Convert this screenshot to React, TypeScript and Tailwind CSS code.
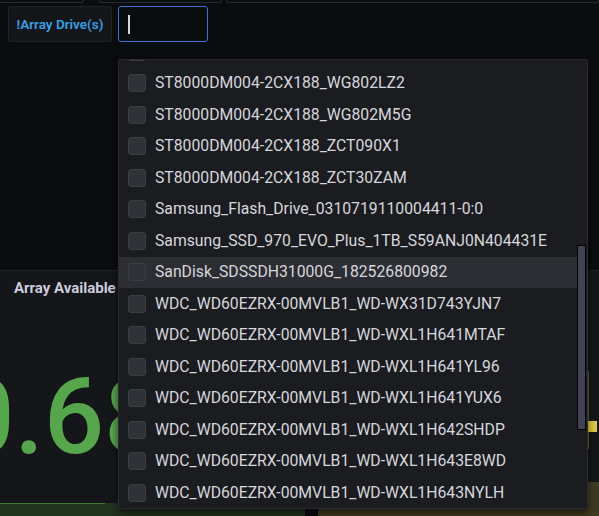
import React from 'react';

const drives: string[] = [
  'ST8000DM004-2CX188_WG802KZ1',
  'ST8000DM004-2CX188_WG802LZ2',
  'ST8000DM004-2CX188_WG802M5G',
  'ST8000DM004-2CX188_ZCT090X1',
  'ST8000DM004-2CX188_ZCT30ZAM',
  'Samsung_Flash_Drive_0310719110004411-0:0',
  'Samsung_SSD_970_EVO_Plus_1TB_S59ANJ0N404431E',
  'SanDisk_SDSSDH31000G_182526800982',
  'WDC_WD60EZRX-00MVLB1_WD-WX31D743YJN7',
  'WDC_WD60EZRX-00MVLB1_WD-WXL1H641MTAF',
  'WDC_WD60EZRX-00MVLB1_WD-WXL1H641YL96',
  'WDC_WD60EZRX-00MVLB1_WD-WXL1H641YUX6',
  'WDC_WD60EZRX-00MVLB1_WD-WXL1H642SHDP',
  'WDC_WD60EZRX-00MVLB1_WD-WXL1H643E8WD',
  'WDC_WD60EZRX-00MVLB1_WD-WXL1H643NYLH',
];

const DriveRow: React.FC<{ label: string; active?: boolean }> = ({ label, active }) => (
  <div
    className={`flex h-[31.5px] shrink-0 items-center pl-[9px] ${active ? 'bg-[#2d2e33]' : ''}`}
  >
    <span className="h-[18px] w-[18px] shrink-0 rounded-[3px] border border-[#3d3e43] bg-[#313237]" />
    <span className="ml-[9px] whitespace-nowrap text-[15.75px] text-[#d6d7dd]">{label}</span>
  </div>
);

export default function App() {
  return (
    <div className="relative h-[516px] w-[599px] overflow-hidden bg-[#0b0c0e] font-['Roboto',sans-serif]">
      {/* bottoms of the row above */}
      <div className="flex h-[3px] gap-[24px]">
        <div className="ml-[-4px] w-[88px] rounded-b-[3px] border-x border-b border-[#2a2b30]" />
        <div className="-ml-[9px] w-[123px] rounded-b-[3px] border-x border-b border-[#2a2b30]" />
        <div className="-ml-[20px] flex-1 rounded-b-[3px] border-x border-b border-[#2a2b30]" />
      </div>

      {/* variable bar */}
      <div className="flex gap-[6px] px-[8px] pt-[3px]">
        <div className="flex h-[36px] w-[104px] items-center justify-center rounded-[3px] border border-[#202226] bg-[#141619] text-[13.5px] font-semibold text-[#33a2e5]">
          !Array Drive(s)
        </div>
        <div className="flex h-[36px] w-[90px] items-center rounded-[3px] border border-[#3d71d9] bg-[#0b0c0e] pl-[9px]">
          <span className="h-[19px] w-[2px] bg-[#d8d9dd]" />
        </div>
      </div>

      {/* panels behind the dropdown */}
      <div className="mt-[228px] flex h-[246px] gap-[13px]">
        <div className="relative flex w-[305px] flex-col overflow-hidden border-t border-[#202226] bg-[#141619]">
          <div className="pl-[14px] pt-[6px] text-[15px] font-bold text-[#ccccdc]">Array Available</div>
          <div className="ml-[-106px] mt-[64px] text-[106px] font-medium leading-none text-[#56a64b]">30.68%</div>
          <div className="absolute bottom-0 left-0 right-0 h-[13px] bg-[#22341f]">
            <div className="h-[1px] w-[105px] bg-[#3f7a35]" />
          </div>
        </div>
        <div className="relative flex-1 overflow-hidden border-t border-[#202226] bg-[#141619]">
          <div className="absolute left-[270px] top-[100px] h-[78px] w-[1px] bg-[#6b6228]" />
          <div className="absolute left-[270px] top-[150px] h-[11px] w-[9px] bg-[#e0cd3f]" />
          <div className="absolute bottom-0 left-0 right-0 h-[34px] bg-[#3f3b22]" />
        </div>
      </div>

      {/* open dropdown */}
      <div className="absolute left-[118px] top-[59px] h-[450px] w-[470px] overflow-hidden rounded-[2px] border border-[#2a2b30] bg-[#1b1c20] shadow-[0_4px_8px_rgba(0,0,0,0.6)]">
        <div className="-mt-[24px] flex w-[459px] flex-col">
          {drives.map((d) => (
            <DriveRow key={d} label={d} active={d.startsWith('SanDisk')} />
          ))}
        </div>
        <div className="absolute right-[1px] top-[185px] h-[185px] w-[9px] border border-black bg-[#414354]" />
      </div>
    </div>
  );
}
